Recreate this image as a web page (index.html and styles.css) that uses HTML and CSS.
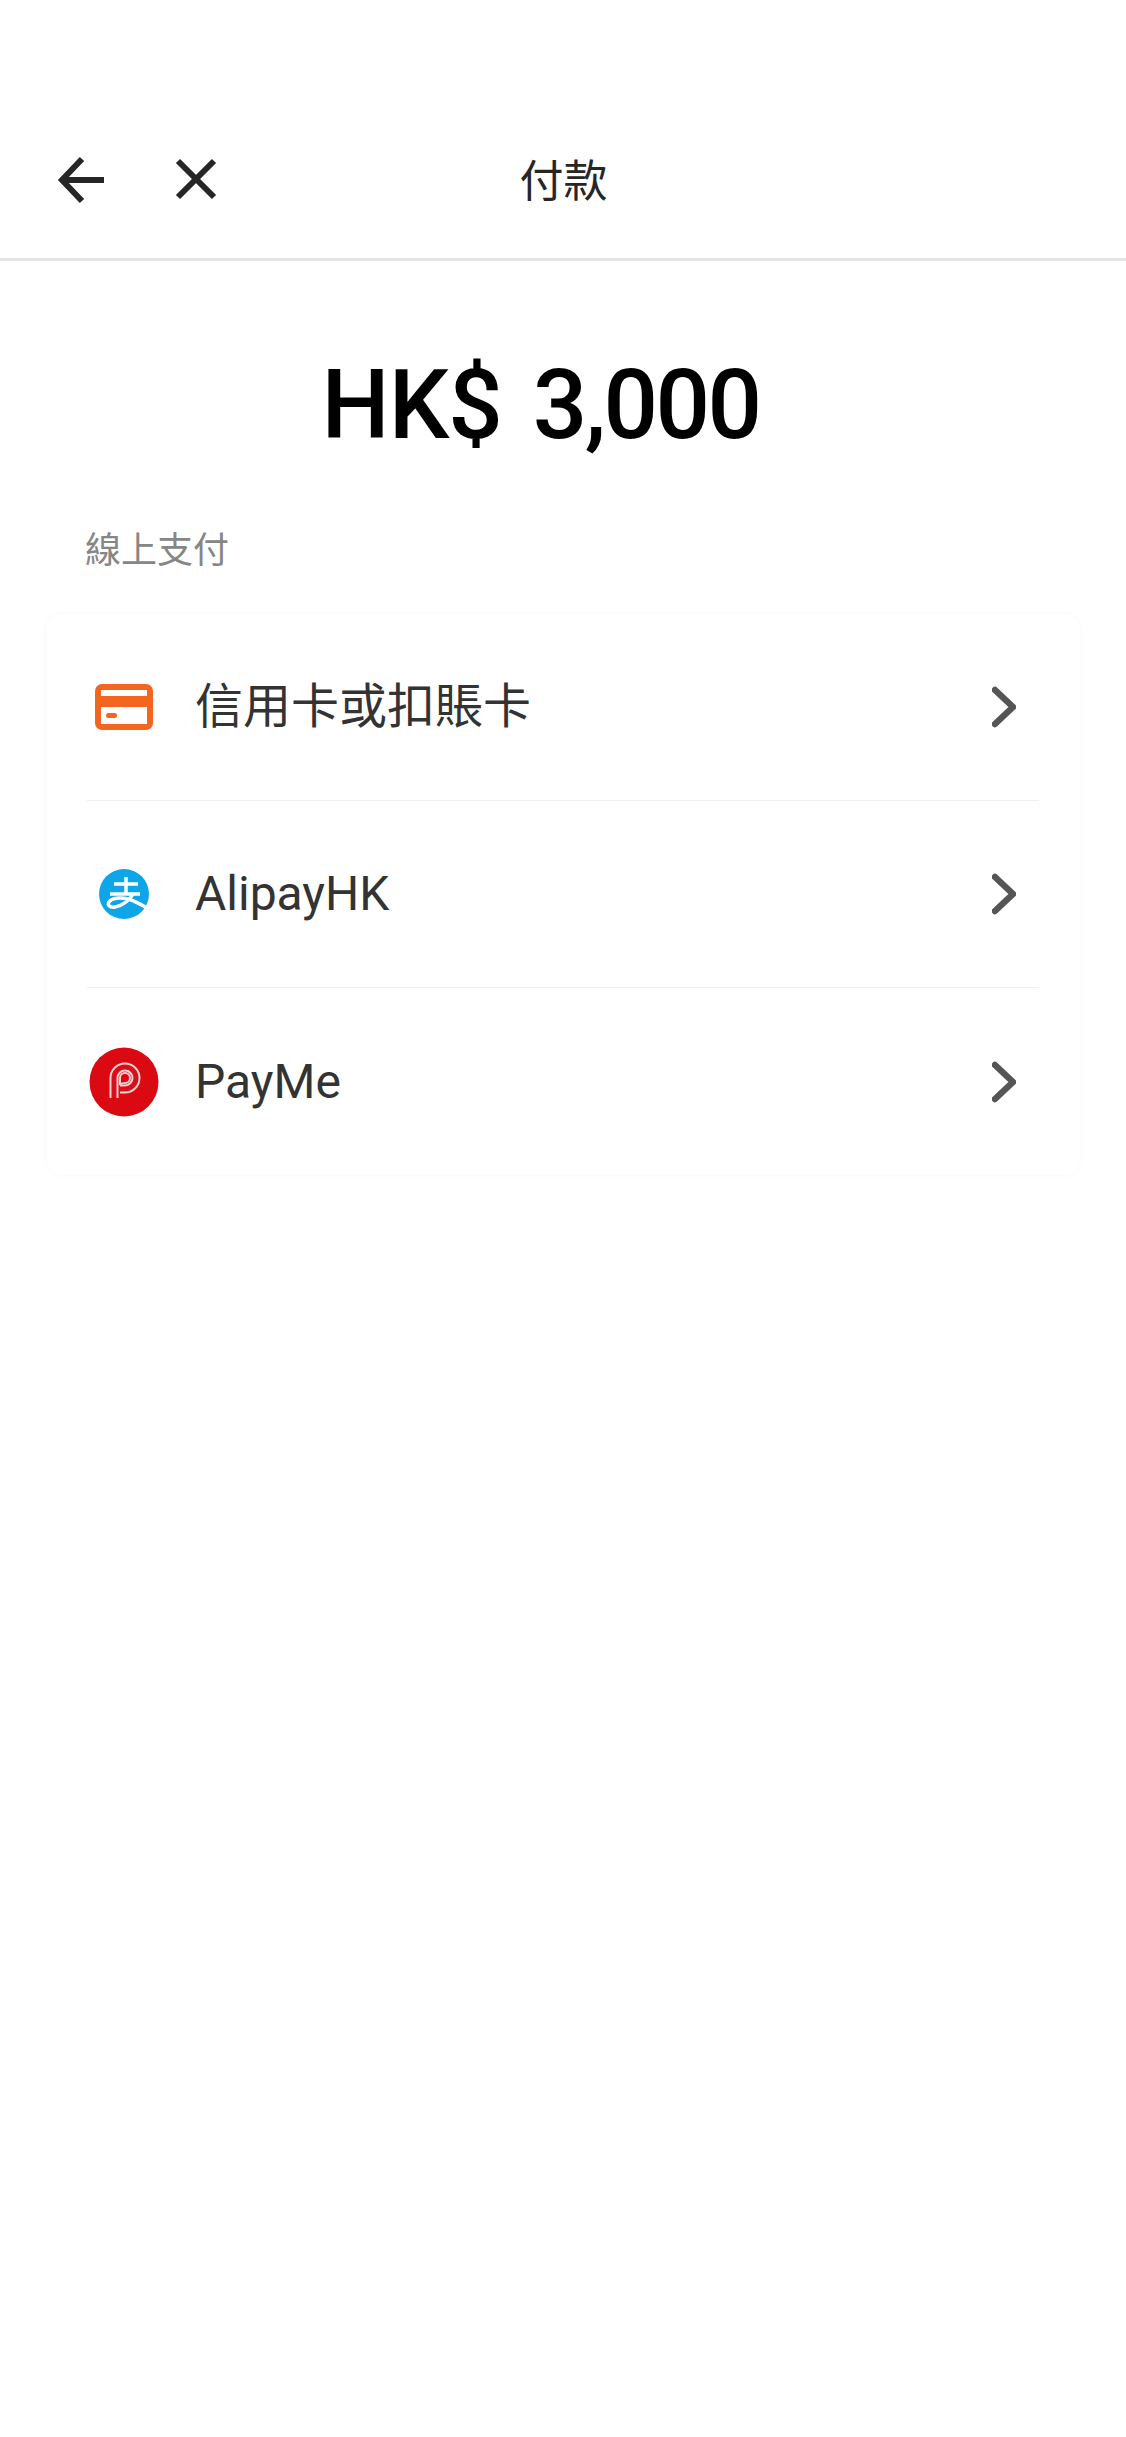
FILE: index.html
```html
<!DOCTYPE html>
<html lang="zh-Hant">
<head>
<meta charset="utf-8">
<title>付款</title>
<link rel="stylesheet" href="styles.css">
</head>
<body>
<header class="topbar">
  <svg class="nav-icon back" width="50" height="48" viewBox="0 0 50 48"><path d="M48 24H7M26 3 6 24l20 21" fill="none" stroke="#262626" stroke-width="6"/></svg>
  <svg class="nav-icon close" width="44" height="44" viewBox="0 0 44 44"><path d="M4 4l36 36M40 4 4 40" fill="none" stroke="#262626" stroke-width="6"/></svg>
  <h1 class="title">付款</h1>
</header>
<main class="content">
  <div class="amount"><span>HK$</span> <span class="digits">3,000</span></div>
  <div class="section-label">線上支付</div>
  <section class="card">
    <div class="row">
      <span class="row-icon">
        <svg width="58" height="46" viewBox="0 0 58 46"><rect width="58" height="46" rx="7" fill="#f4651f"/><rect x="6" y="6" width="46" height="6" fill="#fff"/><rect x="6" y="23" width="46" height="17" fill="#fff"/><rect x="11" y="29" width="11" height="5" rx="2.5" fill="#f4651f"/></svg>
      </span>
      <span class="row-text">信用卡或扣賬卡</span>
      <svg class="chevron" width="24" height="44" viewBox="0 0 24 44"><path d="M3 5l18 17L3 39" fill="none" stroke="#555" stroke-width="6.5" stroke-linecap="round" stroke-linejoin="round"/></svg>
    </div>
    <div class="row">
      <span class="row-icon">
        <svg width="50" height="50" viewBox="0 0 50 50"><circle cx="25" cy="25" r="25" fill="#0ea5e9"/><path d="M15 15h24M27 8v17M11 25h30M34 25c-3 6-11 12-18 13-5 1-8-2-6-5 3-4 11-5 19-3 7 2 14 6 21 10" fill="none" stroke="#fff" stroke-width="3.5"/></svg>
      </span>
      <span class="row-text">AlipayHK</span>
      <svg class="chevron" width="24" height="44" viewBox="0 0 24 44"><path d="M3 5l18 17L3 39" fill="none" stroke="#555" stroke-width="6.5" stroke-linecap="round" stroke-linejoin="round"/></svg>
    </div>
    <div class="row">
      <span class="row-icon">
        <svg width="70" height="70" viewBox="0 0 70 70"><circle cx="35" cy="35" r="34.5" fill="#db0a12"/><path d="M25 51V31a11 11 0 1 1 11 11h-5" fill="none" stroke="#f7d0d2" stroke-width="9"/><path d="M25 51V31a11 11 0 1 1 11 11h-5" fill="none" stroke="#d60f18" stroke-width="5"/><path d="M31 37v-6a5 5 0 1 1 5 5z" fill="#e0000f" stroke="#f7d0d2" stroke-width="2"/></svg>
      </span>
      <span class="row-text">PayMe</span>
      <svg class="chevron" width="24" height="44" viewBox="0 0 24 44"><path d="M3 5l18 17L3 39" fill="none" stroke="#555" stroke-width="6.5" stroke-linecap="round" stroke-linejoin="round"/></svg>
    </div>
  </section>
</main>
</body>
</html>
```

FILE: styles.css
```css
* { box-sizing: border-box; }
html, body { margin: 0; padding: 0; }
body {
  width: 1126px;
  height: 2437px;
  background: #fff;
  color: #2b2b2b;
  font-family: Roboto, "Noto Sans CJK TC", sans-serif;
  overflow: hidden;
}
.topbar {
  position: relative;
  height: 261px;
  padding: 156px 0 0 56px;
  display: flex;
  align-items: flex-start;
  border-bottom: 3px solid #e4e4e4;
}
.nav-icon { display: block; flex: none; }
.close { margin: 1px 0 0 68px; }
.title {
  position: absolute;
  left: 1px;
  right: 0;
  top: 152px;
  margin: 0;
  text-align: center;
  font-size: 44px;
  line-height: 60px;
  font-weight: 400;
  color: #262626;
}
.content { padding: 0 46px; }
.amount {
  margin-top: 84px;
  padding-right: 45px;
  text-align: center;
  font-size: 96px;
  line-height: 120px;
  font-weight: 500;
  color: #000;
  letter-spacing: -1px;
  word-spacing: 8px;
}
.digits { letter-spacing: -2.6px; }
.section-label {
  margin: 61px 0 0 39px;
  font-size: 36px;
  line-height: 50px;
  color: #868686;
}
.card {
  margin-top: 38px;
  height: 561px;
  border-radius: 16px;
  background: #fff;
  box-shadow: 0 0 6px rgba(0, 0, 0, 0.03);
  padding: 0 41px;
}
.row {
  height: 187px;
  display: flex;
  align-items: center;
  border-bottom: 1px solid #f1f1f1;
  position: relative;
}
.row:last-child { border-bottom: 0; }
.row-icon {
  width: 108px;
  flex: none;
  display: flex;
  justify-content: center;
  padding-right: 35px;
}
.row-icon svg { display: block; }
.row-text {
  flex: 1;
  font-size: 48px;
  line-height: 60px;
  color: #333;
}
.chevron { flex: none; margin-right: 23px; }
```
